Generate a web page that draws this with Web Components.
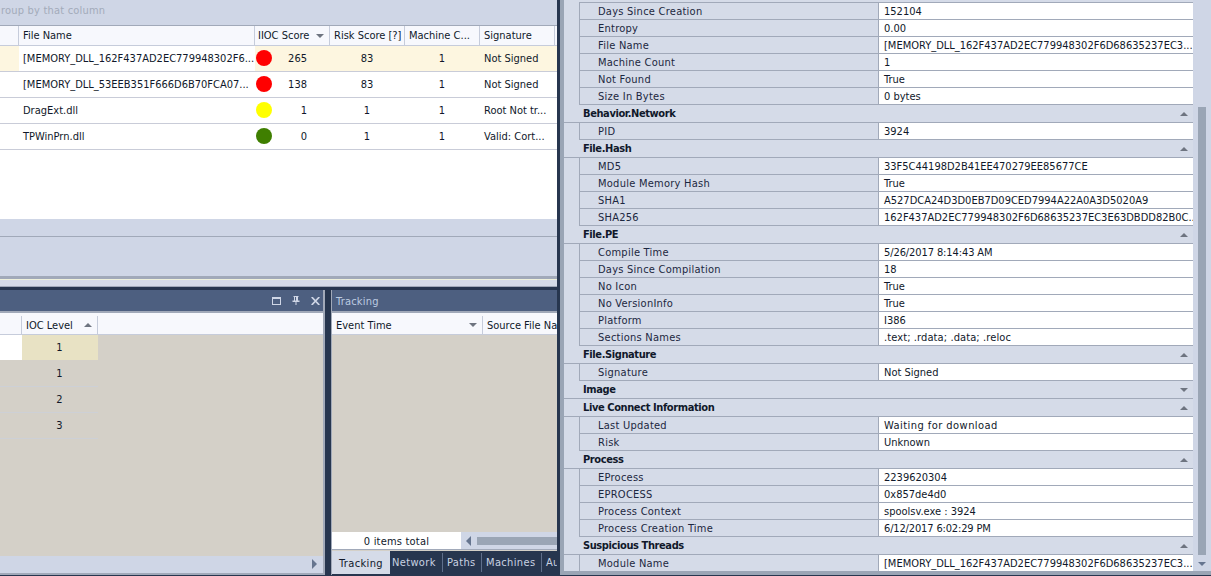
<!DOCTYPE html>
<html>
<head>
<meta charset="utf-8">
<style>
html,body{margin:0;padding:0;height:576px;overflow:hidden;background:#27364f}
body{font:11px "DejaVu Sans Condensed","DejaVu Sans",sans-serif;font-stretch:condensed;color:#10182a}
</style>
</head>
<body>
<x-app>
  <x-left slot="left">
    <x-results>
      <x-row head>
        <x-cell></x-cell><x-cell>File Name</x-cell><x-cell pad="3">IIOC Score<x-tri dir="down" at="end"></x-tri></x-cell><x-cell>Risk Score [?]</x-cell><x-cell>Machine C...</x-cell><x-cell>Signature</x-cell><x-cell last></x-cell>
      </x-row>
      <x-row selected>
        <x-cell></x-cell><x-cell plain>[MEMORY_DLL_162F437AD2EC779948302F6...</x-cell><x-cell score><x-dot color="#ff0000"></x-dot>265</x-cell><x-cell align="center">83</x-cell><x-cell align="center">1</x-cell><x-cell>Not Signed</x-cell><x-cell last></x-cell>
      </x-row>
      <x-row>
        <x-cell></x-cell><x-cell>[MEMORY_DLL_53EEB351F666D6B70FCA07...</x-cell><x-cell score><x-dot color="#ff0000"></x-dot>138</x-cell><x-cell align="center">83</x-cell><x-cell align="center">1</x-cell><x-cell>Not Signed</x-cell><x-cell last></x-cell>
      </x-row>
      <x-row>
        <x-cell></x-cell><x-cell>DragExt.dll</x-cell><x-cell score><x-dot color="#ffff00"></x-dot>1</x-cell><x-cell align="center">1</x-cell><x-cell align="center">1</x-cell><x-cell>Root Not tr...</x-cell><x-cell last></x-cell>
      </x-row>
      <x-row>
        <x-cell></x-cell><x-cell>TPWinPrn.dll</x-cell><x-cell score><x-dot color="#3f7f00"></x-dot>0</x-cell><x-cell align="center">1</x-cell><x-cell align="center">1</x-cell><x-cell>Valid: Cort...</x-cell><x-cell last></x-cell>
      </x-row>
    </x-results>
    <x-split></x-split>
    <x-docks>
      <x-pane buttons style="width:325px">
        <x-lowrow head>
          <x-cell></x-cell><x-cell>IOC Level<x-tri dir="up" at="end"></x-tri></x-cell><x-cell last></x-cell>
        </x-lowrow>
        <x-lowrow first><x-cell plain></x-cell><x-cell hl align="center">1</x-cell></x-lowrow>
        <x-lowrow><x-cell></x-cell><x-cell align="center">1</x-cell></x-lowrow>
        <x-lowrow><x-cell></x-cell><x-cell align="center">2</x-cell></x-lowrow>
        <x-lowrow><x-cell></x-cell><x-cell align="center">3</x-cell></x-lowrow>
        <x-hscroll slot="foot"></x-hscroll>
      </x-pane>
      <x-pane title="Tracking" style="width:226px;margin-left:6px" tracking>
        <x-trackhead>
          <x-cell>Event Time<x-tri dir="down" at="end"></x-tri></x-cell><x-cell last>Source File Na</x-cell>
        </x-trackhead>
        <x-total slot="foot"></x-total>
        <x-tabs slot="foot">
          <x-tab active>Tracking</x-tab><x-tab first style="width:53px">Network</x-tab><x-tab style="width:39px">Paths</x-tab><x-tab style="width:60px">Machines</x-tab><x-tab last>Au</x-tab>
        </x-tabs>
      </x-pane>
    </x-docks>
  </x-left>
  <x-props slot="right">
    <x-prop name="Days Since Creation">152104</x-prop>
    <x-prop name="Entropy">0.00</x-prop>
    <x-prop name="File Name">[MEMORY_DLL_162F437AD2EC779948302F6D68635237EC3...</x-prop>
    <x-prop name="Machine Count">1</x-prop>
    <x-prop name="Not Found">True</x-prop>
    <x-prop name="Size In Bytes">0 bytes</x-prop>
    <x-group>Behavior.Network</x-group>
    <x-prop name="PID">3924</x-prop>
    <x-group>File.Hash</x-group>
    <x-prop name="MD5">33F5C44198D2B41EE470279EE85677CE</x-prop>
    <x-prop name="Module Memory Hash">True</x-prop>
    <x-prop name="SHA1">A527DCA24D3D0EB7D09CED7994A22A0A3D5020A9</x-prop>
    <x-prop name="SHA256">162F437AD2EC779948302F6D68635237EC3E63DBDD82B0C...</x-prop>
    <x-group>File.PE</x-group>
    <x-prop name="Compile Time"><span style="letter-spacing:-.1px">5/26/2017 8:14:43 AM</span></x-prop>
    <x-prop name="Days Since Compilation">18</x-prop>
    <x-prop name="No Icon">True</x-prop>
    <x-prop name="No VersionInfo">True</x-prop>
    <x-prop name="Platform">I386</x-prop>
    <x-prop name="Sections Names"><span style="letter-spacing:.1px">.text; .rdata; .data; .reloc</span></x-prop>
    <x-group>File.Signature</x-group>
    <x-prop name="Signature">Not Signed</x-prop>
    <x-group collapsed>Image</x-group>
    <x-group>Live Connect Information</x-group>
    <x-prop name="Last Updated"><span style="letter-spacing:.45px">Waiting for download</span></x-prop>
    <x-prop name="Risk">Unknown</x-prop>
    <x-group>Process</x-group>
    <x-prop name="EProcess">2239620304</x-prop>
    <x-prop name="EPROCESS">0x857de4d0</x-prop>
    <x-prop name="Process Context">spoolsv.exe : 3924</x-prop>
    <x-prop name="Process Creation Time"><span style="letter-spacing:-.15px">6/12/2017 6:02:29 PM</span></x-prop>
    <x-group>Suspicious Threads</x-group>
    <x-prop name="Module Name">[MEMORY_DLL_162F437AD2EC779948302F6D68635237EC3...</x-prop>
  </x-props>
</x-app>
<script>
const C={light:'#cfd6e6',panel:'#d5dbe8',line:'#a1a9b9',navy:'#27364f',title:'#4d5f80',beige:'#d4d0c8',head:'#f7f8fd',rowline:'#c9ccd8',thumb:'#9aa5b5'};
function def(name,css,html,init){
  customElements.define(name,class extends HTMLElement{
    constructor(){super();const r=this.attachShadow({mode:'open'});r.innerHTML='<style>'+css+'</style>'+(typeof html==='function'?html(this):html);}
    connectedCallback(){if(init)init(this,this.shadowRoot);}
  });
}
def('x-app',`:host{display:grid;grid-template-columns:557px 3px 4px 1fr;height:576px;width:1211px;overflow:hidden}
 .n{background:${C.navy}}.g{background:${C.thumb};height:575px}`,
 `<slot name="left"></slot><div class="n"></div><div class="g"></div><slot name="right"></slot>`);
def('x-left',`:host{display:flex;flex-direction:column;height:576px;min-width:0;overflow:hidden;background:${C.navy}}`,`<slot></slot>`);
def('x-results',`:host{display:flex;flex-direction:column;height:276px;flex:none;background:#fff;--cols:19px 236px 75px 75px 75px 75px 1fr}
 .grp{height:25px;flex:none;background:${C.light};border-bottom:1px solid ${C.line};color:#a3abba;display:flex;align-items:center;padding-left:1px;letter-spacing:.2px}
 .grp span{position:relative;top:-2px}
 .fill{flex:1}
 .f1{height:17px;flex:none;background:${C.light};border-bottom:1px solid ${C.line}}
 .f2{height:39px;flex:none;background:${C.light}}`,
 `<div class="grp"><span>roup by that column</span></div><slot></slot><div class="fill"></div><div class="f1"></div><div class="f2"></div>`);
def('x-split',`:host{display:block;height:11px;flex:none;box-sizing:border-box;background:${C.panel};border-top:3px solid ${C.line};border-bottom:1px solid ${C.line}}
 div{height:1px;background:#eef0dc}`,`<div></div>`);
def('x-docks',`:host{display:flex;flex:1;min-height:0;padding:3px 0 1px}`,`<slot></slot>`);
def('x-row',`:host{display:grid;grid-template-columns:var(--cols);height:26px;flex:none;box-sizing:border-box;border-bottom:1px solid ${C.rowline};background:#fff}
 :host([selected]){background:#fdf6e0}
 :host([head]){height:20px;background:${C.head};border-bottom:1px solid #c6ccdb;--sep:#c6ccdb}`,`<slot></slot>`);
def('x-lowrow',`:host{display:grid;grid-template-columns:22px 76px;height:26px;flex:none;box-sizing:border-box;border-bottom:1px solid #cdd0d6;width:98px}
 :host([first]){border-bottom-color:transparent}
 :host([head]){grid-template-columns:22px 76px 1fr;width:auto;height:20px;background:${C.head};border-bottom:1px solid #c6ccdb;--sep:#c6ccdb;padding-top:1px}`,`<slot></slot>`);
def('x-trackhead',`:host{display:grid;grid-template-columns:151px 1fr;height:20px;flex:none;box-sizing:border-box;background:${C.head};border-bottom:1px solid #c6ccdb;--sep:#c6ccdb;padding-top:1px}`,`<slot></slot>`);
def('x-cell',`:host{display:flex;align-items:center;position:relative;box-sizing:border-box;padding:0 4px;min-width:0;overflow:hidden;white-space:nowrap;border-right:1px solid var(--sep,transparent)}
 :host([last]){border-right:0}
 :host([pad="3"]){padding-left:3px}
 :host([align=center]){justify-content:center}
 :host([plain]){background:#fff}
 :host([hl]){background:#e8e2c4}
 :host([score]){justify-content:flex-end;padding:0 22px 0 1px}`,`<slot></slot>`);
def('x-dot',`:host{display:block;width:16px;height:16px;border-radius:50%;position:absolute;left:1px;top:4px;background:var(--c)}`,``,(e)=>{e.style.setProperty('--c',e.getAttribute('color'))});
def('x-tri',`:host{position:absolute;right:5px;top:50%;margin-top:-2px;width:0;height:0;border-left:4px solid transparent;border-right:4px solid transparent}
 :host([dir=down]){border-top:4px solid #6e7480}
 :host([dir=up]){border-bottom:4px solid #6e7480}`,``);
def('x-pane',`:host{display:flex;flex-direction:column;flex:none;min-width:0;overflow:hidden;background:${C.beige};box-sizing:border-box;border-right:2px solid ${C.line}}
 :host([buttons]){border-bottom:2px solid ${C.line}}
 :host([tracking]){border-right:0;border-left:1px solid ${C.line}}
 .t{height:21px;flex:none;background:${C.title};display:flex;align-items:center;justify-content:flex-end;color:#bccbe0;padding:0 3px;gap:11px;box-sizing:border-box;letter-spacing:.2px}
 :host([tracking]) .t{justify-content:flex-start;margin-left:-1px;padding:1px 0 0 5px}
 .s{height:4px;flex:none;box-sizing:border-box;border-top:2px solid ${C.line};background:${C.head}}
 .b{flex:1;min-height:0;display:flex;flex-direction:column;overflow:hidden}
 svg{display:block}`,
 (e)=>`<div class="t">${e.hasAttribute('buttons')?`
 <svg width="9" height="8" viewBox="0 0 9 8"><path d="M0 0h9v8H0z M1 2v5h7V2z" fill="#cfd6e6" fill-rule="evenodd"/></svg>
 <svg width="8" height="9" viewBox="0 0 8 9"><path d="M1.5 0h5v1h-.5v3.5H7.5V6H4.5v3h-1V6H.5V4.5H2V1h-.5z M3 1v3.5h1V1z" fill="#cfd6e6" fill-rule="evenodd"/></svg>
 <svg width="9" height="8" viewBox="0 0 9 8"><path d="M.7 0 8.3 8M8.3 0 .7 8" stroke="#cfd6e6" stroke-width="1.7" fill="none"/></svg>`:`<span></span>`}</div><div class="s"></div><div class="b"><slot></slot></div><slot name="foot"></slot>`,
 (e,r)=>{if(e.getAttribute('title'))r.querySelector('.t span').textContent=e.getAttribute('title');e.removeAttribute('title');});
def('x-hscroll',`:host{display:flex;align-items:center;justify-content:flex-end;height:17px;flex:none;background:${C.light};box-sizing:border-box;padding:0 6px 2px 0;border-bottom:0}
 i{display:block;width:0;height:0;border-left:5px solid #66758f;border-top:5px solid transparent;border-bottom:5px solid transparent}`,`<i></i>`);
def('x-total',`:host{display:flex;height:17px;flex:none;border-bottom:1px solid ${C.line};margin-bottom:1px;box-sizing:content-box;background:${C.light}}
 .c{width:129px;background:#fff;display:flex;align-items:center;justify-content:center;padding-top:1px;box-sizing:border-box;letter-spacing:.2px}
 .s{flex:1;display:flex;align-items:center;padding-left:5px;gap:6px}
 .a{width:0;height:0;border-right:5px solid #66758f;border-top:5px solid transparent;border-bottom:5px solid transparent}
 .th{flex:1;height:8px;background:${C.thumb}}`,`<div class="c">0 items total</div><div class="s"><div class="a"></div><div class="th"></div></div>`);
def('x-tabs',`:host{display:flex;height:24px;flex:none;background:${C.navy};margin-left:-1px;padding-left:1px;overflow:hidden;letter-spacing:.35px}`,`<slot></slot>`);
def('x-tab',`:host{display:flex;align-items:center;flex:none;box-sizing:border-box;color:#c9d2e2;height:23px;padding:0 0 0 4px;position:relative;white-space:nowrap}
 :host([active]){background:${C.panel};color:#10182a;padding:1px 0 0;width:58px;justify-content:center}
 :host([first]){padding-left:2px}
 :host(:not([active]):not([last])){border-right:1px solid #5f6f8b;height:19px;margin-top:2px}
 `,`<slot></slot>`);
def('x-props',`:host{display:flex;height:575px;box-sizing:border-box;border-bottom:4px solid ${C.thumb};overflow:hidden;background:${C.light};min-width:0}
 .l{width:629px;flex:none;padding-top:2px;background:${C.panel}}
 .top{height:1px;margin-left:15px;background:${C.line}}
 .sb{flex:1;display:flex;flex-direction:column;align-items:flex-start;padding:107px 0 0 5px}
 .th{width:8px;height:448px;background:${C.thumb}}
 .a{width:0;height:0;margin:7px 0 0 0;border-left:4px solid transparent;border-right:4px solid transparent;border-top:4px solid #66758f}`,
 `<div class="l"><div class="top"></div><slot></slot></div><div class="sb"><div class="th"></div><div class="a"></div></div>`);
def('x-group',`:host{display:flex;align-items:center;justify-content:space-between;height:18px;box-sizing:border-box;border-bottom:1px solid ${C.line};font-weight:bold;letter-spacing:-.4px;padding:0 5px 0 19px;background:${C.panel}}
 i{display:block;width:0;height:0;border-left:4px solid transparent;border-right:4px solid transparent;border-bottom:4px solid #6e7480}
 :host([collapsed]) i{border-bottom:0;border-top:4px solid #6e7480}`,`<slot></slot><i></i>`);
def('x-prop',`:host{display:grid;grid-template-columns:299px 1fr;height:17px;box-sizing:border-box;border-bottom:1px solid ${C.line};margin-left:15px;border-left:1px solid ${C.line}}
 .n{padding-left:18px;border-right:1px solid ${C.line};display:flex;align-items:center;color:#1c2740;white-space:nowrap;overflow:hidden;letter-spacing:.25px}
 .v{background:#fff;padding-left:5px;display:flex;align-items:center;white-space:nowrap;overflow:hidden;min-width:0}`,
 (e)=>`<div class="n"></div><div class="v"><slot></slot></div>`,
 (e,r)=>{r.querySelector('.n').textContent=e.getAttribute('name');});
</script>
</body>
</html>
